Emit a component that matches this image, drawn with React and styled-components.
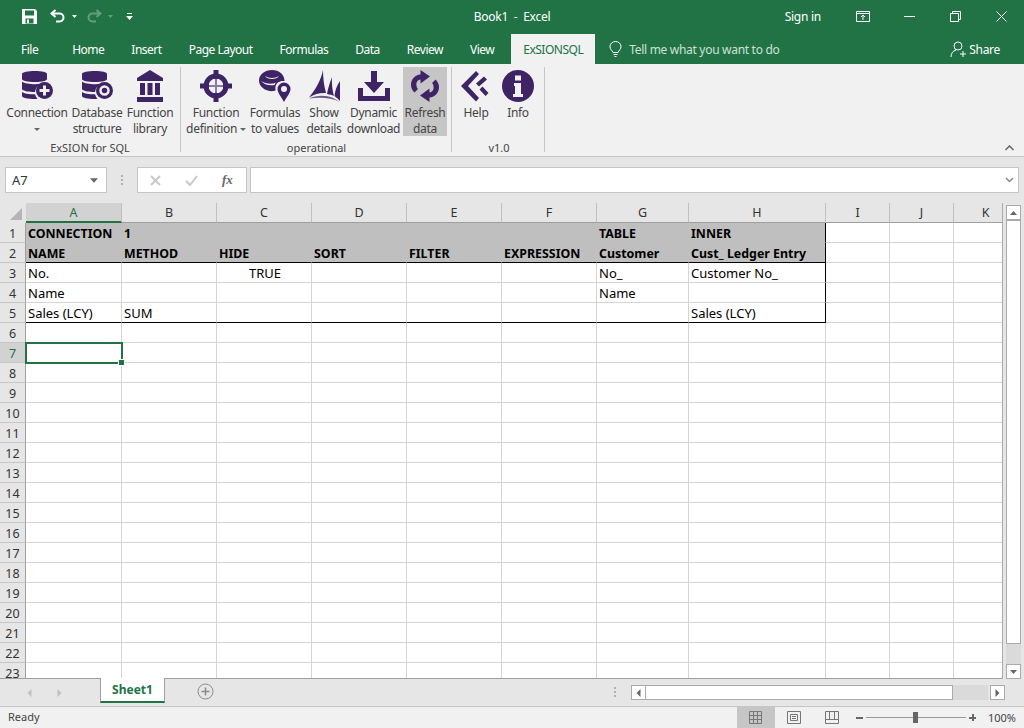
import styled, { createGlobalStyle } from "styled-components";

const GlobalStyle = createGlobalStyle`
  html, body {
    margin: 0;
    padding: 0;
    width: 1024px;
    height: 728px;
    overflow: hidden;
    background: #e6e6e6;
    font-family: "Noto Sans", "Open Sans", sans-serif;
  }
  * { box-sizing: border-box; }
`;

const PURPLE = "#3e2464";
const GREEN = "#217346";

const COLS = [
  { name: "A", width: 96 },
  { name: "B", width: 95 },
  { name: "C", width: 95 },
  { name: "D", width: 95 },
  { name: "E", width: 95 },
  { name: "F", width: 95 },
  { name: "G", width: 92 },
  { name: "H", width: 137 },
  { name: "I", width: 64 },
  { name: "J", width: 64 },
  { name: "K", width: 64 },
];

const CELLS = {
  A1: "CONNECTION", B1: "1", G1: "TABLE", H1: "INNER",
  A2: "NAME", B2: "METHOD", C2: "HIDE", D2: "SORT", E2: "FILTER", F2: "EXPRESSION", G2: "Customer", H2: "Cust_ Ledger Entry",
  A3: "No.", C3: "TRUE", G3: "No_", H3: "Customer No_",
  A4: "Name", G4: "Name",
  A5: "Sales (LCY)", B5: "SUM", H5: "Sales (LCY)",
};

const Page = styled.div`
  width: 1024px;
  height: 728px;
  display: flex;
  flex-direction: column;
  overflow: hidden;
`;

const TitleBar = styled.div`
  height: 34px;
  flex: none;
  background: ${GREEN};
  color: #fff;
  display: grid;
  grid-template-columns: 1fr auto 1fr;
  align-items: center;
  padding-bottom: 2px;
  font-size: 12px;
  letter-spacing: -0.25px;
`;

const QuickAccess = styled.div`
  display: flex;
  align-items: center;
  padding-left: 22px;
`;

const WindowControls = styled.div`
  display: flex;
  align-items: center;
  justify-content: flex-end;
`;

const SignIn = styled.span`
  margin-right: 19px;
`;

const WinButton = styled.span`
  width: 46px;
  display: flex;
  justify-content: center;
  align-items: center;
`;

const TabRow = styled.div`
  height: 30px;
  flex: none;
  background: ${GREEN};
  color: #fff;
  display: flex;
  align-items: center;
  gap: 27px;
  padding-left: 21px;
  font-size: 12px;
  letter-spacing: -0.5px;
`;

const Tab = styled.span`
  margin-right: ${(p) => (p.$first ? "7px" : "0")};
`;

const ActiveTab = styled.span`
  background: #f1f1f1;
  color: ${GREEN};
  height: 30px;
  width: 84px;
  margin-left: -10px;
  display: flex;
  align-items: center;
  justify-content: center;
`;

const TellMe = styled.span`
  display: flex;
  align-items: center;
  gap: 7px;
  margin-left: -13px;
  color: #cfe0d6;
  letter-spacing: -0.3px;
`;

const Share = styled.span`
  margin-left: auto;
  margin-right: 24px;
  display: flex;
  align-items: center;
  gap: 3px;
  letter-spacing: -0.3px;
`;

const Ribbon = styled.div`
  height: 93px;
  flex: none;
  background: #f1f1f1;
  border-bottom: 1px solid #c6c6c6;
  display: flex;
  padding: 3px 0 0 5px;
  position: relative;
  color: #444;
  font-size: 12px;
  letter-spacing: -0.3px;
`;

const Group = styled.div`
  display: flex;
  flex-direction: column;
  padding-right: ${(p) => p.$pad || 5}px;
  margin-right: 5px;
  height: 85px;
  border-right: 1px solid #c6c6c6;
`;

const GroupButtons = styled.div`
  display: flex;
  flex: none;
  height: 72px;
`;

const GroupLabel = styled.div`
  height: 18px;
  flex: none;
  text-align: center;
  font-size: 11px;
  letter-spacing: 0;
  line-height: 18px;
  color: #444;
`;

const RibbonButton = styled.div`
  width: ${(p) => p.$width}px;
  height: 69px;
  display: flex;
  flex-direction: column;
  align-items: center;
  padding-top: 3px;
  background: ${(p) => (p.$active ? "#c6c6c6" : "transparent")};
  line-height: 16px;
  text-align: center;
  white-space: nowrap;
  svg { flex: none; margin-bottom: 3px; }
`;

const Caret = styled.span`
  display: inline-block;
  width: 0;
  height: 0;
  border-left: 3px solid transparent;
  border-right: 3px solid transparent;
  border-top: 3px solid #666;
  vertical-align: middle;
`;

const Collapse = styled.svg`
  position: absolute;
  right: 10px;
  bottom: 5px;
`;

const FormulaBar = styled.div`
  height: 46px;
  flex: none;
  background: #e6e6e6;
  display: flex;
  align-items: center;
  padding: 0 5px;
`;

const NameBox = styled.div`
  width: 102px;
  height: 26px;
  background: #fff;
  border: 1px solid #c6c6c6;
  display: flex;
  align-items: center;
  justify-content: space-between;
  padding: 0 8px 0 6px;
  font-size: 13px;
  color: #333;
`;

const Grip = styled.div`
  width: 2px;
  height: 11px;
  margin: 0 ${(p) => p.$mx || 14}px;
  background-image: linear-gradient(#b0b0b0 2px, transparent 2px);
  background-size: 2px 4px;
`;

const FxBox = styled.div`
  width: 110px;
  height: 26px;
  background: #fff;
  border: 1px solid #c6c6c6;
  display: flex;
  align-items: center;
  padding-left: 12px;
  gap: 24px;
  margin-right: 3px;
`;

const FxLabel = styled.span`
  font-family: "Liberation Serif", serif;
  font-style: italic;
  font-size: 13px;
  font-weight: bold;
  color: #666;
`;

const FormulaInput = styled.div`
  flex: 1;
  height: 26px;
  background: #fff;
  border: 1px solid #c6c6c6;
  display: flex;
  align-items: center;
  justify-content: flex-end;
  padding-right: 4px;
`;

const SheetArea = styled.div`
  flex: 1;
  min-height: 0;
  display: flex;
  background: #e6e6e6;
`;

const Grid = styled.div`
  width: 1003px;
  height: 100%;
  overflow: hidden;
  border-bottom: 1px solid #9f9f9f;
  border-right: 1px solid #ababab;
`;

const HeaderRow = styled.div`
  display: flex;
  height: 20px;
`;

const Corner = styled.div`
  width: 26px;
  height: 19px;
  position: relative;
  flex: none;
  &::after {
    content: "";
    position: absolute;
    right: 4px;
    bottom: 2px;
    border-style: solid;
    border-width: 0 0 12px 12px;
    border-color: transparent transparent #b5b5b5 transparent;
  }
`;

const ColHead = styled.div`
  width: ${(p) => p.$width}px;
  flex: none;
  height: 20px;
  display: flex;
  align-items: center;
  justify-content: center;
  font-size: 12.5px;
  color: ${(p) => (p.$selected ? GREEN : "#333")};
  background: ${(p) => (p.$selected ? "#d2d2d2" : "#e6e6e6")};
  border-right: 1px solid #c0c0c0;
  border-bottom: ${(p) => (p.$selected ? `2px solid ${GREEN}` : "1px solid #9f9f9f")};
`;

const Row = styled.div`
  display: flex;
  height: 20px;
`;

const RowHead = styled.div`
  width: 26px;
  flex: none;
  display: flex;
  align-items: center;
  justify-content: center;
  padding-top: 1px;
  font-size: 12.5px;
  color: ${(p) => (p.$selected ? GREEN : "#333")};
  background: ${(p) => (p.$selected ? "#d2d2d2" : "#e6e6e6")};
  border-right: 1px solid #9f9f9f;
  border-bottom: 1px solid #c6c6c6;
`;

const Cell = styled.div`
  width: ${(p) => p.$width}px;
  flex: none;
  height: 20px;
  position: relative;
  padding: 0 0 0 2px;
  font-size: ${(p) => (p.$bold ? "12.4px" : "13px")};
  line-height: 21px;
  white-space: nowrap;
  color: #000;
  font-weight: ${(p) => (p.$bold ? 700 : 400)};
  text-align: ${(p) => (p.$center ? "center" : "left")};
  background: ${(p) => (p.$filled ? "#bfbfbf" : "#fff")};
  border-right: 1px solid ${(p) => (p.$edge ? "#000" : p.$filled ? "#bfbfbf" : "#d4d4d4")};
  border-bottom: 1px solid ${(p) => (p.$line ? "#000" : p.$filled ? "#bfbfbf" : "#d4d4d4")};
`;

const Selection = styled.div`
  position: absolute;
  z-index: 2;
  top: -1px;
  left: -1px;
  width: calc(100% + 3px);
  height: 22px;
  border: 2px solid ${GREEN};
  &::after {
    content: "";
    position: absolute;
    right: -4px;
    bottom: -4px;
    width: 5px;
    height: 5px;
    background: ${GREEN};
    border: 1px solid #fff;
    box-sizing: content-box;
  }
`;

const VScroll = styled.div`
  width: 21px;
  height: 100%;
  padding: 2px 3px 0 3px;
  display: flex;
  flex-direction: column;
`;

const ScrollBtn = styled.div`
  width: 15px;
  height: 15px;
  flex: none;
  background: #fff;
  border: 1px solid #ababab;
  display: flex;
  align-items: center;
  justify-content: center;
`;

const VThumb = styled.div`
  width: 15px;
  height: 424px;
  flex: none;
  background: #fff;
  border: 1px solid #ababab;
`;

const VTrack = styled.div`
  flex: 1;
  width: 15px;
  background: #dadada;
`;

const SheetBar = styled.div`
  height: 28px;
  flex: none;
  background: #e6e6e6;
  display: flex;
  align-items: flex-start;
  position: relative;
  border-bottom: 1px solid #c6c6c6;
`;

const SheetNav = styled.div`
  width: 100px;
  height: 27px;
  display: flex;
  align-items: center;
  padding-left: 26px;
  gap: 23px;
`;

const SheetTab = styled.div`
  width: 65px;
  height: 25px;
  background: #fff;
  margin-top: -1px;
  border-left: 1px solid #9f9f9f;
  border-right: 1px solid #9f9f9f;
  border-bottom: 2px solid ${GREEN};
  color: ${GREEN};
  font-size: 12px;
  font-weight: 700;
  display: flex;
  align-items: center;
  justify-content: center;
`;

const AddSheet = styled.div`
  margin: 4px 0 0 32px;
  display: flex;
`;

const HScrollWrap = styled.div`
  margin-left: auto;
  display: flex;
  align-items: center;
  height: 15px;
  margin-top: 6px;
  margin-right: 19px;
`;

const HThumb = styled.div`
  width: 307px;
  height: 15px;
  background: #fff;
  border: 1px solid #ababab;
  border-left: none;
`;

const HTrack = styled.div`
  width: 35px;
  height: 15px;
  background: #dadada;
  margin-right: 2px;
`;

const StatusBar = styled.div`
  height: 21px;
  flex: none;
  background: #f1f1f1;
  display: flex;
  align-items: center;
  font-size: 11px;
  color: #444;
  padding: 0 0 2px 8px;
`;

const ViewButton = styled.div`
  height: 21px;
  width: 38px;
  background: ${(p) => (p.$active ? "#c6c6c6" : "transparent")};
  display: flex;
  align-items: center;
  justify-content: center;
`;

const StatusRight = styled.div`
  margin-left: auto;
  margin-bottom: -2px;
  display: flex;
  align-items: center;
`;

const Zoom = styled.div`
  display: flex;
  align-items: center;
  gap: 3px;
  margin: 0 12px 0 5px;
`;

const ZoomPercent = styled.span`
  margin-right: 8px;
`;

const ZoomSign = styled.span`
  width: 7px;
  height: 7px;
  display: block;
  position: relative;
  &::before, &::after {
    content: "";
    position: absolute;
    background: #666;
  }
  &::before { left: 0; right: 0; top: 3px; height: 2px; }
  &::after { display: ${(p) => (p.$plus ? "block" : "none")}; top: 0; bottom: 0; left: 3px; width: 2px; }
`;

const ZoomTrack = styled.div`
  width: 100px;
  height: 1px;
  background: #999;
  position: relative;
  &::after {
    content: "";
    position: absolute;
    left: 47px;
    top: -5px;
    width: 5px;
    height: 11px;
    background: #666;
  }
`;

const Arrow = ({ dir, color = "#666", size = 7 }) => {
  const points = {
    up: "0,6 7,6 3.5,2",
    down: "0,2 7,2 3.5,6",
    left: "5.5,0 5.5,8 1.5,4",
    right: "1.5,0 1.5,8 5.5,4",
  };
  return (
    <svg width={size} height={size + 1} viewBox="0 0 7 8">
      <polygon points={points[dir]} fill={color} />
    </svg>
  );
};

const SaveIcon = () => (
  <svg width="15" height="15" viewBox="0 0 15 15" style={{ marginRight: 13 }}>
    <path fillRule="evenodd" fill="#fff" d="M0 0h13l2 2v13H0z M3 1.500v5h9v-5z M3.500 9.500v5h8v-5z" />
    <rect x="5" y="10.500" width="2" height="3.500" fill="#fff" />
  </svg>
);

const UndoIcon = ({ opacity = 1, flip }) => (
  <svg width="16" height="14" viewBox="0 0 16 14" style={{ opacity, transform: flip ? "scaleX(-1)" : "none" }}>
    <path d="M5.500 1 1.500 4.500 5.500 8M2 4.500h7.500a4 4 0 0 1 0 8H6" fill="none" stroke="#fff" strokeWidth="2" />
  </svg>
);

const SmallCaret = ({ opacity = 1, ml, mr }) => (
  <svg width="5" height="3" viewBox="0 0 5 3" style={{ opacity, marginLeft: ml, marginRight: mr }}>
    <polygon points="0,0 5,0 2.500,3" fill="#fff" />
  </svg>
);

const DbShape = () => (
  <path d="M14 1c7 0 12 1 12 3v5c0 2-5 3-12 3S1 11 1 9V4c0-2 6-3 13-3z M1 11.500c2 2 8 2.700 13 2.700 2 0 4-.1 5.500-.4A11 11 0 0 0 14 22c-6 0-11-.8-13-2.500z M1 22c2 1.500 7 2.300 13 2.300.5 1.700 1.300 3.200 2.500 4.500-.5.2-1.500.2-2.500.2-7 0-13-1-13-3z" fill={PURPLE} />
);

const ConnectionIcon = () => (
  <svg width="32" height="32" viewBox="0 0 32 32">
    <DbShape />
    <circle cx="23.500" cy="20.500" r="8.500" fill={PURPLE} />
    <path d="M22 15.500h3V19h3.500v3H25v3.500h-3V22h-3.500v-3H22z" fill="#f1f1f1" />
  </svg>
);

const StructureIcon = () => (
  <svg width="32" height="32" viewBox="0 0 32 32">
    <DbShape />
    <circle cx="23.500" cy="20.500" r="8.500" fill={PURPLE} />
    <circle cx="23.500" cy="20.500" r="4" fill="none" stroke="#f1f1f1" strokeWidth="2.500" />
  </svg>
);

const LibraryIcon = () => (
  <svg width="32" height="32" viewBox="0 0 32 32">
    <path d="M16 0 29 8v3H3V8z M6 13h5v12H6z M13.500 13h5v12h-5z M21 13h5v12h-5z M3 27h26v5H3z" fill={PURPLE} />
  </svg>
);

const TargetIcon = () => (
  <svg width="32" height="32" viewBox="0 0 32 32">
    <circle cx="16" cy="16" r="10" fill="none" stroke={PURPLE} strokeWidth="5" />
    <path d="M13.500 0h5v9h-5z M13.500 23h5v9h-5z M0 13.500h9v5H0z M23 13.500h9v5h-9z" fill={PURPLE} />
    <path d="M15 9h2v14h-2z M9 15h14v2H9z" fill="#8b7aa3" />
  </svg>
);

const FormulasIcon = () => (
  <svg width="32" height="32" viewBox="0 0 32 32">
    <path d="M13 0c7 0 12.500 4.500 12.500 11-3.500-.5-8 1-9 5.500-.3 1.300-.2 2.500.2 3.800-1.500.7-2.700.9-3.700.9C6 21.200 0 16.500 0 10.500S6 0 13 0z" fill={PURPLE} />
    <path d="M6 6c4 2.500 10 2.500 14 0-2 4-12 4-14 0z M2 11c5 3 11 3.500 15 1.500-1 1-1 1.500-1.500 2.500C10 16 5 14.500 2 11z" fill="#f1f1f1" />
    <path fillRule="evenodd" d="M25 12.500a6.500 6.500 0 0 1 6.500 6.500c0 4-4 8-6.500 13-2.500-5-6.500-9-6.500-13a6.500 6.500 0 0 1 6.500-6.500zm0 3.500a3 3 0 1 0 0 6 3 3 0 0 0 0-6z" fill={PURPLE} />
  </svg>
);

const SailsIcon = () => (
  <svg width="32" height="32" viewBox="0 0 32 32">
    <path d="M15 0c0 8 1 16 3 23-5-.5-11 .5-17 4.500C8 19 13 10 15 0z M24 7c-.5 6 .5 14 2 19-2-1-4-1.500-7-2 1-6 3-12 5-17z M32 11v20c-2-2-3.500-3.500-5.500-5 .5-5 2-10 5.500-15z" fill={PURPLE} />
    <path d="M1 28.500c8-3.500 17-3.500 24-.5 2 1 4 2 7 4-8-4-19-5-31-3.500z" fill={PURPLE} opacity="0.75" />
  </svg>
);

const DownloadIcon = () => (
  <svg width="32" height="32" viewBox="0 0 32 32">
    <path d="M13 1h6v11h7L16 23 6 12h7z" fill={PURPLE} />
    <path d="M0 18h5v8h22v-8h5v13H0z" fill={PURPLE} />
  </svg>
);

const RefreshIcon = () => (
  <svg width="32" height="32" viewBox="0 0 32 32">
    <path d="M2 15c0-6 4-10 9.500-10.500V0L21 6.500l-9.500 7V9.500C8.500 10 7 12.500 7.500 15.500 7.500 17 8 18 9 19l-3.500 3.500C3.500 20.500 2 18 2 15z" fill={PURPLE} />
    <path d="M30 17c0 6-4 10-9.500 10.500V32L11 25.500l9.500-7v4c3-.5 4.500-3 4-6 0-1.500-.5-2.500-1.500-3.500l3.500-3.500C28.500 11.500 30 14 30 17z" fill={PURPLE} />
  </svg>
);

const HelpIcon = () => (
  <svg width="32" height="32" viewBox="0 0 32 32">
    <path d="M16 1 19 4 8 16l11 12-3 3.500L1 16z" fill={PURPLE} />
    <path d="M24 6.500l3 3-8 7-3-3z M19.500 19.500l3-3 6 6.500-3 3z" fill={PURPLE} />
  </svg>
);

const InfoIcon = () => (
  <svg width="32" height="32" viewBox="0 0 32 32">
    <circle cx="16" cy="16" r="16" fill={PURPLE} />
    <path d="M13 5.500h6v5h-6z M12 13h7v11h2v3H11v-3h2v-8h-1z" fill="#f1f1f1" />
  </svg>
);

const ribbonGroups = [
  {
    label: "ExSION for SQL",
    pad: 5,
    buttons: [
      { width: 64, icon: <ConnectionIcon />, lines: ["Connection", <Caret key="c" />] },
      { width: 56, icon: <StructureIcon />, lines: ["Database", "structure"] },
      { width: 50, icon: <LibraryIcon />, lines: ["Function", "library"] },
    ],
  },
  {
    label: "operational",
    pad: 4,
    buttons: [
      { width: 60, icon: <TargetIcon />, lines: ["Function", <span key="d">definition <Caret /></span>] },
      { width: 58, icon: <FormulasIcon />, lines: ["Formulas", "to values"] },
      { width: 40, icon: <SailsIcon />, lines: ["Show", "details"] },
      { width: 59, icon: <DownloadIcon />, lines: ["Dynamic", "download"] },
      { width: 44, icon: <RefreshIcon />, lines: ["Refresh", "data"], active: true },
    ],
  },
  {
    label: "v1.0",
    pad: 3,
    buttons: [
      { width: 38, icon: <HelpIcon />, lines: ["Help"] },
      { width: 46, icon: <InfoIcon />, lines: ["Info"] },
    ],
  },
];

const App = () => {
  const rows = Array.from({ length: 23 }, (_, i) => i + 1);
  return (
    <Page>
      <GlobalStyle />
      <TitleBar>
        <QuickAccess>
          <SaveIcon />
          <UndoIcon />
          <SmallCaret ml={6} mr={9} />
          <UndoIcon flip opacity={0.3} />
          <SmallCaret opacity={0.3} ml={6} mr={13} />
          <svg width="7" height="7" viewBox="0 0 7 7">
            <path d="M1 0h5v1H1z M0 3h7L3.500 7z" fill="#fff" />
          </svg>
        </QuickAccess>
        <span>Book1&nbsp; -&nbsp; Excel</span>
        <WindowControls>
          <SignIn>Sign in</SignIn>
          <WinButton>
            <svg width="14" height="11" viewBox="0 0 14 11">
              <path d="M.5.500h13v10H.500z M.5 2.500h13" fill="none" stroke="#fff" />
              <path d="M7 4v5M5 6l2-2 2 2" fill="none" stroke="#fff" />
            </svg>
          </WinButton>
          <WinButton>
            <svg width="11" height="1" viewBox="0 0 11 1"><path d="M0 0h11v1H0z" fill="#fff" /></svg>
          </WinButton>
          <WinButton>
            <svg width="11" height="11" viewBox="0 0 11 11">
              <path d="M.5 2.500h8v8h-8z M2.500 2.500v-2h8v8h-2" fill="none" stroke="#fff" />
            </svg>
          </WinButton>
          <WinButton>
            <svg width="11" height="11" viewBox="0 0 11 11">
              <path d="M.5.500l10 10M10.500.500l-10 10" fill="none" stroke="#fff" />
            </svg>
          </WinButton>
        </WindowControls>
      </TitleBar>

      <TabRow>
        <Tab $first>File</Tab>
        <Tab>Home</Tab>
        <Tab>Insert</Tab>
        <Tab>Page Layout</Tab>
        <Tab>Formulas</Tab>
        <Tab>Data</Tab>
        <Tab>Review</Tab>
        <Tab>View</Tab>
        <ActiveTab>ExSIONSQL</ActiveTab>
        <TellMe>
          <svg width="13" height="16" viewBox="0 0 13 16">
            <path d="M4 11.500C3 9 1 8.500 1 5.500a5.500 5 0 0 1 11 0c0 3-2 3.500-3 6z M4.500 13.500h4 M5.500 15.500h2" fill="none" stroke="#fff" />
          </svg>
          Tell me what you want to do
        </TellMe>
        <Share>
          <svg width="16" height="16" viewBox="0 0 16 16">
            <circle cx="8" cy="5" r="4" fill="none" stroke="#fff" />
            <path d="M1 16c0-4 2-6 5-7 M10 13h6M13 10v6" fill="none" stroke="#fff" />
          </svg>
          Share
        </Share>
      </TabRow>

      <Ribbon>
        {ribbonGroups.map((group) => (
          <Group key={group.label} $pad={group.pad}>
            <GroupButtons>
              {group.buttons.map((b, i) => (
                <RibbonButton key={i} $width={b.width} $active={b.active}>
                  {b.icon}
                  {b.lines.map((line, j) => (
                    <div key={j}>{line}</div>
                  ))}
                </RibbonButton>
              ))}
            </GroupButtons>
            <GroupLabel>{group.label}</GroupLabel>
          </Group>
        ))}
        <Collapse width="9" height="6" viewBox="0 0 9 6">
          <path d="M.5 5 4.500 1l4 4" fill="none" stroke="#666" strokeWidth="1.500" />
        </Collapse>
      </Ribbon>

      <FormulaBar>
        <NameBox>
          A7
          <Arrow dir="down" size={8} />
        </NameBox>
        <Grip />
        <FxBox>
          <svg width="11" height="11" viewBox="0 0 11 11">
            <path d="M1 1l9 9M10 1l-9 9" stroke="#c8c8c8" strokeWidth="2" />
          </svg>
          <svg width="13" height="11" viewBox="0 0 13 11">
            <path d="M1 6l4 4 7-9" fill="none" stroke="#c8c8c8" strokeWidth="2" />
          </svg>
          <FxLabel>fx</FxLabel>
        </FxBox>
        <FormulaInput>
          <svg width="9" height="6" viewBox="0 0 9 6">
            <path d="M1 1l3.500 3.500L8 1" fill="none" stroke="#888" strokeWidth="1.500" />
          </svg>
        </FormulaInput>
      </FormulaBar>

      <SheetArea>
        <Grid>
          <HeaderRow>
            <Corner />
            {COLS.map((c) => (
              <ColHead key={c.name} $width={c.width} $selected={c.name === "A"}>{c.name}</ColHead>
            ))}
          </HeaderRow>
          {rows.map((r) => (
            <Row key={r}>
              <RowHead $selected={r === 7}>{r}</RowHead>
              {COLS.map((c, ci) => {
                const inTable = ci < 8;
                return (
                  <Cell
                    key={c.name}
                    $width={c.width}
                    $filled={inTable && r <= 2}
                    $bold={r <= 2}
                    $center={c.name === "C" && r === 3}
                    $edge={c.name === "H" && r <= 5}
                    $line={inTable && (r === 2 || r === 5)}
                  >
                    {CELLS[c.name + r]}
                    {c.name === "A" && r === 7 && <Selection />}
                  </Cell>
                );
              })}
            </Row>
          ))}
        </Grid>
        <VScroll>
          <ScrollBtn><Arrow dir="up" /></ScrollBtn>
          <VThumb />
          <VTrack />
          <ScrollBtn><Arrow dir="down" /></ScrollBtn>
        </VScroll>
      </SheetArea>

      <SheetBar>
        <SheetNav>
          <Arrow dir="left" color="#c0c0c0" />
          <Arrow dir="right" color="#c0c0c0" />
        </SheetNav>
        <SheetTab>Sheet1</SheetTab>
        <AddSheet>
          <svg width="17" height="17" viewBox="0 0 17 17">
            <circle cx="8.500" cy="8.500" r="7.500" fill="none" stroke="#8a8a8a" />
            <path d="M8.500 4.500v8M4.500 8.500h8" stroke="#8a8a8a" strokeWidth="1.500" />
          </svg>
        </AddSheet>
        <HScrollWrap>
          <Grip $mx={15} />
          <ScrollBtn><Arrow dir="left" /></ScrollBtn>
          <HThumb />
          <HTrack />
          <ScrollBtn><Arrow dir="right" /></ScrollBtn>
        </HScrollWrap>
      </SheetBar>

      <StatusBar>
        Ready
        <StatusRight>
          <ViewButton $active>
            <svg width="13" height="13" viewBox="0 0 13 13">
              <path d="M.5.500h12v12H.500z M4.500.500v12M8.500.500v12M.5 4.500h12M.5 8.500h12" fill="none" stroke="#777" />
            </svg>
          </ViewButton>
          <ViewButton>
            <svg width="14" height="13" viewBox="0 0 14 13">
              <path d="M.5.500h13v12H.500z M3.500 3.500h7v6h-7z M5 5.500h4M5 7.500h4" fill="none" stroke="#777" />
            </svg>
          </ViewButton>
          <ViewButton>
            <svg width="14" height="13" viewBox="0 0 14 13">
              <path d="M.5.500h13v12H.500z M4.500.500v8h5v-8M.5 8.500h13" fill="none" stroke="#777" />
            </svg>
          </ViewButton>
          <Zoom>
            <ZoomSign />
            <ZoomTrack />
            <ZoomSign $plus />
          </Zoom>
          <ZoomPercent>100%</ZoomPercent>
        </StatusRight>
      </StatusBar>
    </Page>
  );
};

export default App;
